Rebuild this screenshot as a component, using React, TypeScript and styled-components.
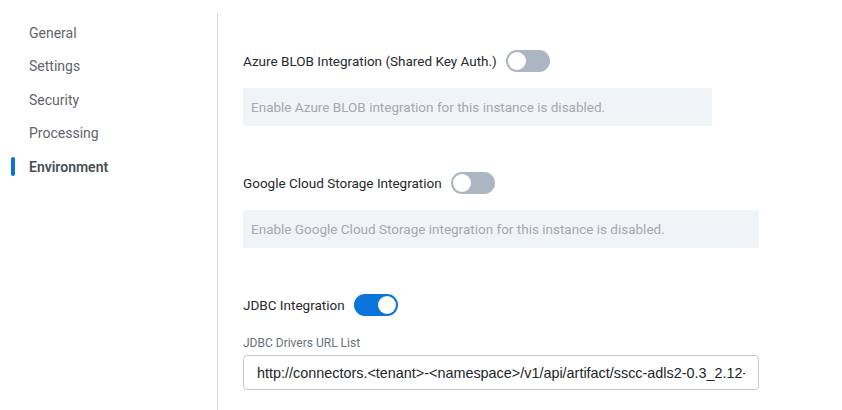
import React, { useState } from "react";
import styled, { createGlobalStyle } from "styled-components";

const GlobalStyle = createGlobalStyle`
    body {
        margin : 0;
        background : #ffffff;
        font-family : Roboto, "Liberation Sans", sans-serif;
    }
`

const PageStyled = styled.div`
    display : flex;
    flex-direction : row;
    width : 842px;
    height : 410px;
    overflow : hidden;
`

const SideNavStyled = styled.nav`
    width : 217px;
    padding-top : 16px;
    display : flex;
    flex-direction : column;
`

const NavItemStyled = styled.div<{active?:boolean}>`
    position : relative;
    height : 33.5px;
    display : flex;
    align-items : center;
    padding-left : 29px;
    font-size : 14px;
    color : ${(props) => props.active ? '#4a4f55' : '#5f656c'};
    font-weight : ${(props) => props.active ? 600 : 400};
    &::before{
        content : '';
        display : ${(props) => props.active ? 'block' : 'none'};
        position : absolute;
        left : 11px;
        top : 7px;
        width : 4px;
        height : 19px;
        border-radius : 2px;
        background : #0a72d9;
    }
`

const DividerStyled = styled.div`
    width : 1px;
    margin-top : 13px;
    background : #d5d9de;
`

const ContentStyled = styled.main`
    flex : 1;
    padding : 41px 0 0 25px;
    display : flex;
    flex-direction : column;
`

const SectionStyled = styled.section`
    margin-bottom : 37px;
`

const HeaderRowStyled = styled.div`
    display : flex;
    align-items : center;
    gap : 9px;
    height : 40px;
    font-size : 13.5px;
    color : #26292d;
`

const SwitchStyled = styled.button<{on:boolean}>`
    position : relative;
    width : 44px;
    height : 22px;
    border : none;
    padding : 0;
    border-radius : 11px;
    background : ${(props) => props.on ? '#0a74da' : '#acb6c2'};
    cursor : pointer;
    &::after{
        content : '';
        position : absolute;
        top : 2px;
        left : ${(props) => props.on ? '24px' : '2px'};
        width : 18px;
        height : 18px;
        border-radius : 50%;
        background : #ffffff;
    }
`

const DisabledNoteStyled = styled.div<{width:number}>`
    width : ${(props) => props.width}px;
    margin-top : 7px;
    height : 38px;
    box-sizing : border-box;
    padding-left : 8px;
    display : flex;
    align-items : center;
    background : #f1f4f7;
    color : #a3a9b0;
    font-size : 13.5px;
`

const FieldLabelStyled = styled.label`
    display : block;
    margin-top : 11px;
    margin-bottom : 5px;
    line-height : 14px;
    font-size : 12px;
    color : #6b7178;
`

const InputStyled = styled.input`
    width : 516px;
    height : 35px;
    box-sizing : border-box;
    border : 1px solid #c4cad1;
    border-radius : 4px;
    padding : 0 13px;
    font-family : "Liberation Sans", Arial, sans-serif;
    font-size : 14.4px;
    color : #222529;
    outline : none;
`

const menu = ['General', 'Settings', 'Security', 'Processing', 'Environment'];

const integrations = [
    { key : 'azure', title : 'Azure BLOB Integration (Shared Key Auth.)', note : 'Enable Azure BLOB integration for this instance is disabled.', width : 469 },
    { key : 'gcs', title : 'Google Cloud Storage Integration', note : 'Enable Google Cloud Storage integration for this instance is disabled.', width : 516 },
];

const App = () => {
    const [enabled, setEnabled] = useState<any>({ azure : false, gcs : false, jdbc : true });

    const toggle = (key:string) => {
        setEnabled({ ...enabled, [key] : !enabled[key] });
    }

    return (
        <PageStyled>
            <GlobalStyle />
            <SideNavStyled>
                {menu.map((item) => (
                    <NavItemStyled key={item} active={item === 'Environment'}>{item}</NavItemStyled>
                ))}
            </SideNavStyled>
            <DividerStyled />
            <ContentStyled>
                {integrations.map((data) => (
                    <SectionStyled key={data.key}>
                        <HeaderRowStyled>
                            {data.title}
                            <SwitchStyled on={enabled[data.key]} onClick={() => toggle(data.key)} />
                        </HeaderRowStyled>
                        {/* 비활성화 상태일 때 안내 문구 */}
                        {!enabled[data.key] && <DisabledNoteStyled width={data.width}>{data.note}</DisabledNoteStyled>}
                    </SectionStyled>
                ))}
                <SectionStyled>
                    <HeaderRowStyled>
                        JDBC Integration
                        <SwitchStyled on={enabled.jdbc} onClick={() => toggle('jdbc')} />
                    </HeaderRowStyled>
                    <FieldLabelStyled>JDBC Drivers URL List</FieldLabelStyled>
                    <InputStyled defaultValue="http://connectors.<tenant>-<namespace>/v1/api/artifact/sscc-adls2-0.3_2.12-0.1.0.jar" />
                </SectionStyled>
            </ContentStyled>
        </PageStyled>
    )
}

export default App
